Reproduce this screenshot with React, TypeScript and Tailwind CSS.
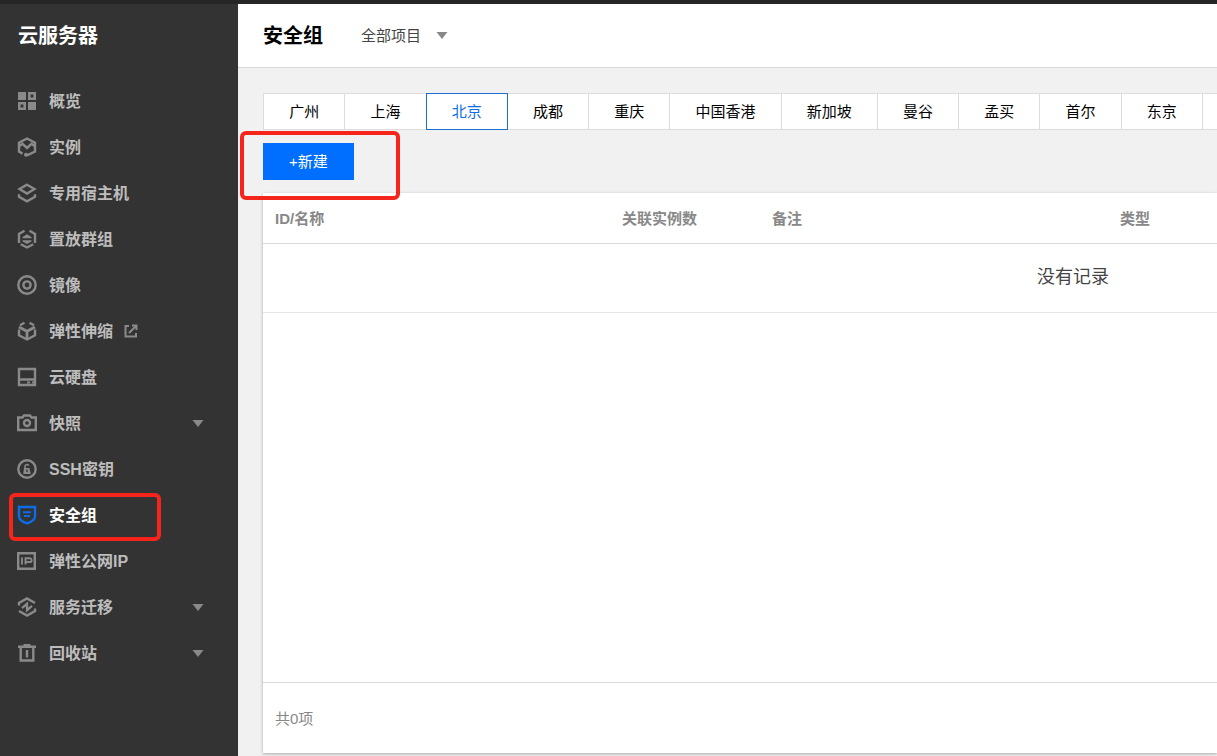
import type { ReactNode } from "react";

type NavItem = {
  label: string;
  icon: ReactNode;
  active?: boolean;
  external?: boolean;
  expandable?: boolean;
};

function Icon({ children }: { children: ReactNode }) {
  return (
    <svg
      viewBox="0 0 20 20"
      className="size-5 shrink-0"
      fill="none"
      stroke="currentColor"
      strokeWidth="2.4"
      aria-hidden="true"
    >
      {children}
    </svg>
  );
}

function Caret({ className }: { className: string }) {
  return (
    <svg viewBox="0 0 12 7" className={className} fill="currentColor" aria-hidden="true">
      <path d="M0.5 0h11L6 7z" />
    </svg>
  );
}

const items: NavItem[] = [
  {
    label: "概览",
    icon: (
      <Icon>
        <path d="M1 1h8v8H1zM11 11h8v8h-8z" fill="currentColor" stroke="none" />
        <path d="M12.3 2.3h5.4v5.4h-5.4zM2.3 12.3h5.4v5.4H2.3z" strokeWidth="2.6" />
      </Icon>
    ),
  },
  {
    label: "实例",
    icon: (
      <Icon>
        <path d="M5.5 16.6L2 14.5V5.8L10 1.5l8 4.3v8.7l-8 3.8" />
        <path d="M2.5 9L5.500 6.800l4.500 4.200 4.500-4.200L17.500 9" />
        <circle cx="9" cy="17.8" r="2" fill="currentColor" stroke="none" />
      </Icon>
    ),
  },
  {
    label: "专用宿主机",
    icon: (
      <Icon>
        <path d="M10 1.7L17.5 6 10 10.5 2.5 6z" />
        <path d="M2 11.3v2.5l8 4.6 8-4.6v-2.5" />
      </Icon>
    ),
  },
  {
    label: "置放群组",
    icon: (
      <Icon>
        <path d="M7.5 1.8L2 5v9M12.5 1.8L18 5v9M3.8 15.2l6.2 3.3 6.2-3.3" />
        <path
          d="M5.5 9.3V8L10 5.3 14.5 8v1.3zM5.5 11.2h9v1.3L10 15l-4.5-2.5z"
          fill="currentColor"
          stroke="none"
        />
      </Icon>
    ),
  },
  {
    label: "镜像",
    icon: (
      <Icon>
        <circle cx="10" cy="10" r="8.7" />
        <circle cx="10" cy="10" r="3.6" />
      </Icon>
    ),
  },
  {
    label: "弹性伸缩",
    external: true,
    icon: (
      <Icon>
        <path d="M7.5 1.8L3 4.3M12.5 1.8L17 4.3M2 8.5v5.8l8 4.2 8-4.2V8.5" />
        <path d="M2 6l8 4.3L18 6M10 10v8.5" strokeWidth="2.8" />
      </Icon>
    ),
  },
  {
    label: "云硬盘",
    icon: (
      <Icon>
        <path d="M2 2h16v16H2zM2 12.5h16" />
        <path d="M10 14.5h3v2h-3zM15 14.5h2v2h-2z" fill="currentColor" stroke="none" />
      </Icon>
    ),
  },
  {
    label: "快照",
    expandable: true,
    icon: (
      <Icon>
        <path d="M1.2 4.5h4.3L7 2.5h6l1.5 2h4.3V17H1.2z" />
        <circle cx="10" cy="10" r="3" />
      </Icon>
    ),
  },
  {
    label: "SSH密钥",
    icon: (
      <Icon>
        <circle cx="10" cy="10" r="8.7" />
        <path d="M8 10V7.4a2 2 0 0 1 3.8-.8" strokeWidth="1.6" />
        <path d="M7 9h5.5l1.3 6H6.2z" fill="currentColor" stroke="none" />
        <path d="M10 10.5v2.5" stroke="#333" strokeWidth="1.3" />
      </Icon>
    ),
  },
  {
    label: "安全组",
    active: true,
    icon: (
      <Icon>
        <path d="M2 2h16v9c0 3.5-3.5 6-8 7.4C5.5 17 2 14.5 2 11z" />
        <path d="M6 7.3h8M7 11h6" strokeWidth="2" />
      </Icon>
    ),
  },
  {
    label: "弹性公网IP",
    icon: (
      <Icon>
        <path d="M1.2 2.2h16.6v15.6H1.2z" />
        <path d="M5 6.5v7M8.5 13.5V7.3h4.3a1.7 1.7 0 0 1 0 3.7H8.5" strokeWidth="1.9" />
      </Icon>
    ),
  },
  {
    label: "服务迁移",
    expandable: true,
    icon: (
      <Icon>
        <path d="M2 8.5V6L10 1.5 18 6M18 11.5V14l-8 4.5L2 14" />
        <path d="M5 11.2L10 6.8v6.4l5-4.4" strokeWidth="2.2" />
      </Icon>
    ),
  },
  {
    label: "回收站",
    expandable: true,
    icon: (
      <Icon>
        <path d="M1 3.7h18M6.5 2.2h7M3.7 3.7v13.8h12.6V3.7M10 7v7.5" />
      </Icon>
    ),
  },
];

const regions = [
  "广州",
  "上海",
  "北京",
  "成都",
  "重庆",
  "中国香港",
  "新加坡",
  "曼谷",
  "孟买",
  "首尔",
  "东京",
];

function Highlight({ className }: { className: string }) {
  return (
    <span
      aria-hidden="true"
      className={`pointer-events-none absolute rounded-md border-4 border-[#f5251b] ${className}`}
    />
  );
}

function Sidebar() {
  return (
    <aside className="w-[238px] shrink-0 bg-[#333]">
      <h2 className="px-[18px] pt-4 text-xl leading-8 font-bold text-white">云服务器</h2>
      <nav className="mt-[26px]">
        <ul>
          {items.map((item) => (
            <li key={item.label} className="relative">
              <a
                href="#"
                aria-current={item.active ? "page" : undefined}
                className={`flex h-[46px] items-center pr-[34px] pl-[17px] text-base font-bold ${
                  item.active ? "text-white" : "text-[#bdbdbd]"
                }`}
              >
                <span className={item.active ? "text-[#0d6de8]" : "text-[#8a8a8a]"}>
                  {item.icon}
                </span>
                <span className="ml-3 pt-0.5">{item.label}</span>
                {item.external && (
                  <svg
                    viewBox="0 0 14 14"
                    className="ml-[11px] size-3.5 text-[#8a8a8a]"
                    fill="none"
                    stroke="currentColor"
                    strokeWidth="2"
                    aria-hidden="true"
                  >
                    <path d="M5 2H1.5v10.5H12V9M8 1.5h4.5V6M12.5 1.5L5 9" />
                  </svg>
                )}
                {item.expandable && <Caret className="ml-auto h-[7px] w-3 text-[#8a8a8a]" />}
              </a>
              {item.active && <Highlight className="top-px left-[9px] h-12 w-[152px]" />}
            </li>
          ))}
        </ul>
      </nav>
    </aside>
  );
}

export default function App() {
  return (
    <div className="flex min-h-screen flex-col overflow-hidden border-t-4 border-[#262626] bg-[#f1f1f1] font-['Liberation_Sans','Noto_Sans_CJK_SC',sans-serif] text-[15px] text-black">
      <div className="flex flex-1">
        <Sidebar />
        <main className="flex min-w-0 flex-1 flex-col">
          <header className="flex h-16 items-center border-b border-[#d9d9d9] bg-white pl-[25px]">
            <h1 className="text-xl font-bold">安全组</h1>
            <div className="relative ml-[38px] flex items-center text-[#444]">
              <select
                aria-label="全部项目"
                className="h-8 appearance-none bg-transparent pr-[26px] leading-8"
              >
                <option>全部项目</option>
              </select>
              <Caret className="pointer-events-none absolute right-0 h-[7px] w-3 text-[#888]" />
            </div>
          </header>

          <div className="flex flex-1 flex-col pt-[25px] pb-[3px] pl-[25px]">
            <div className="flex h-[37px] border-y border-[#dcdcdc] bg-white pr-[14px]">
              {regions.map((region, index) => (
                <button
                  key={region}
                  type="button"
                  className={`-my-px grow border px-[25px] pt-0.5 whitespace-nowrap ${
                    index > 0 ? "-ml-px" : ""
                  } ${
                    region === "北京"
                      ? "relative border-[#1a6fd0] text-[#0d6de8]"
                      : "border-[#dcdcdc]"
                  }`}
                >
                  {region}
                </button>
              ))}
            </div>

            <div className="relative py-[13px]">
              <button
                type="button"
                className="block h-[37px] bg-[#006eff] px-[26px] pt-0.5 text-white"
              >
                +新建
              </button>
              <Highlight className="top-px -left-[23px] h-[69px] w-[160px]" />
            </div>

            <section className="flex flex-1 flex-col overflow-hidden bg-white shadow-[0_1px_3px_rgba(0,0,0,0.3)]">
              <table className="w-[1620px] table-fixed border-collapse">
                <thead>
                  <tr className="h-[50px] border-b border-[#d9d9d9] text-left text-[#888]">
                    <th className="w-[347px] px-3 pt-0.5">ID/名称</th>
                    <th className="w-[150px] px-3 pt-0.5">关联实例数</th>
                    <th className="w-[348px] px-3 pt-0.5">备注</th>
                    <th className="px-3 pt-0.5">类型</th>
                  </tr>
                </thead>
                <tbody>
                  <tr className="h-[69px] border-b border-[#e5e5e5]">
                    <td colSpan={4} className="pb-0.5 text-center text-lg text-[#444]">
                      没有记录
                    </td>
                  </tr>
                </tbody>
              </table>
              <footer className="mt-auto flex h-[71px] items-center border-t border-[#d9d9d9] px-3 pt-0.5 text-[#888]">
                共0项
              </footer>
            </section>
          </div>
        </main>
      </div>
    </div>
  );
}
